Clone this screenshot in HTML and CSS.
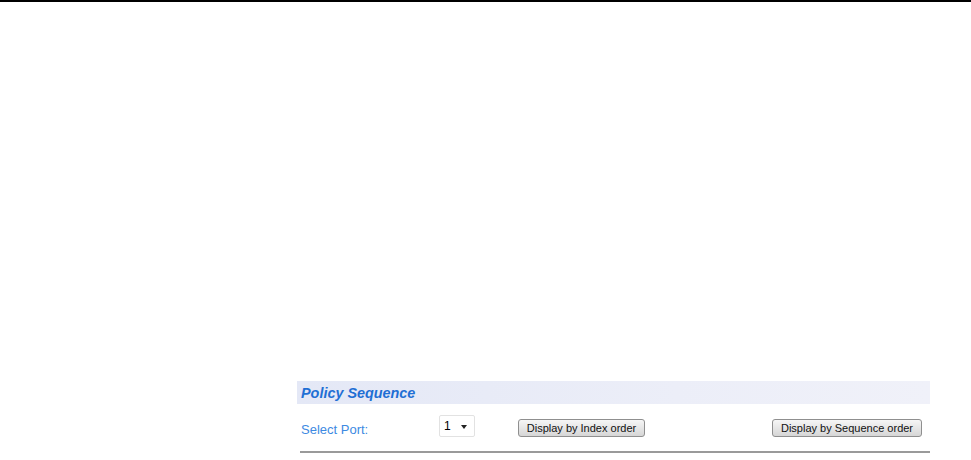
FILE: index.html
```html
<!DOCTYPE html>
<html>
<head>
<meta charset="utf-8">
<link rel="stylesheet" href="styles.css">
</head>
<body>
<div class="topbar"></div>
<div class="panel">
  <div class="panel-header">Policy Sequence</div>
  <div class="controls">
    <span class="label">Select Port:</span>
    <div class="select"><span class="select-value">1</span><span class="select-arrow"></span></div>
    <button class="btn btn-index">Display by Index order</button>
    <button class="btn btn-seq">Display by Sequence order</button>
  </div>
  <div class="rule"></div>
</div>
</body>
</html>
```
FILE: styles.css
```css
html, body {
  margin: 0;
  padding: 0;
  background: #ffffff;
  font-family: "Liberation Sans", Arial, sans-serif;
}
.topbar {
  height: 2px;
  background: #000000;
}
.panel {
  margin: 379px 0 0 297px;
  width: 633px;
}
.panel-header {
  height: 23px;
  line-height: 24px;
  padding-left: 4px;
  background: linear-gradient(to right, #e4e8f6, #eceef8 60%, #f0f1f9);
  color: #1f6fd4;
  font-size: 14.4px;
  font-weight: bold;
  font-style: italic;
}
.controls {
  display: flex;
  align-items: flex-end;
  margin-top: 11px;
  height: 22px;
  padding-left: 4px;
}
.label {
  width: 138px;
  font-size: 13px;
  line-height: 16px;
  color: #3d8ae2;
  margin-bottom: -1px;
}
.select {
  display: flex;
  align-items: center;
  justify-content: space-between;
  padding: 0 7px 0 4px;
  box-sizing: border-box;
  width: 36px;
  height: 22px;
  border: 1px solid #e2e2e2;
  border-radius: 2px;
  background: #ffffff;
  font-size: 12px;
  color: #000;
}
.select-arrow {
  width: 0;
  height: 0;
  border-left: 3px solid transparent;
  border-right: 3px solid transparent;
  border-top: 4px solid #222;
  margin-top: 1px;
}
.btn {
  height: 18px;
  box-sizing: border-box;
  border: 1px solid #8f8f8f;
  border-radius: 3px;
  background: linear-gradient(to bottom, #f6f6f6, #e6e6e6 50%, #d6d6d6);
  font-family: "Liberation Sans", Arial, sans-serif;
  font-size: 11px;
  color: #111;
  padding: 0;
  line-height: 16px;
  text-align: center;
}
.btn-index {
  width: 127px;
  margin-left: 43px;
}
.btn-seq {
  width: 150px;
  margin-left: auto;
  margin-right: 8px;
}
.rule {
  margin: 14px 0 0 3px;
  height: 2px;
  background: #9a9a9a;
}
```
